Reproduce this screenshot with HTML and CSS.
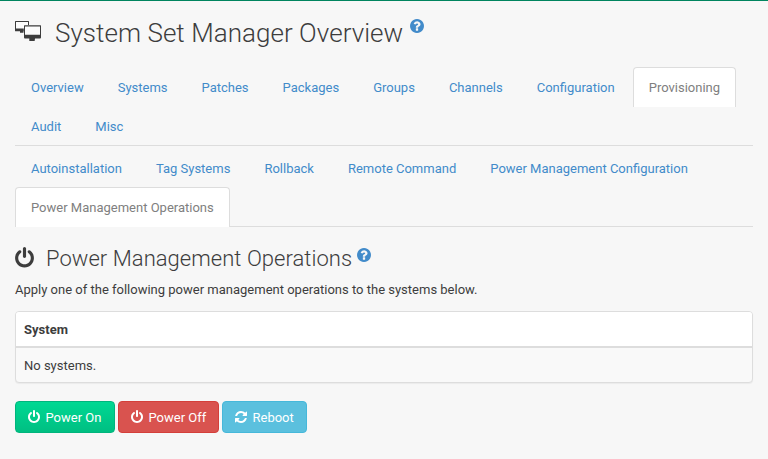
FILE: index.html
```html
<!DOCTYPE html>
<html lang="en">
<head>
<meta charset="utf-8">
<title>System Set Manager Overview</title>
<link rel="stylesheet" href="styles.css">
</head>
<body>
<svg class="defs" width="0" height="0" aria-hidden="true">
  <symbol id="power" viewBox="128 0 1536 1792"><path d="M1664 896q0 156-61 298t-164 245-245 164-298 61-298-61-245-164-164-245-61-298q0-182 80.500-343t226.500-270q43-32 95.500-25t83.500 50q32 42 24.500 94.500t-49.500 84.500q-98 74-151.500 181t-53.500 228q0 104 40.500 198.500t109.500 163.500 163.500 109.500 198.500 40.500 198.500-40.500 163.500-109.500 109.500-163.500 40.500-198.500q0-121-53.500-228t-151.500-181q-42-32-49.500-84.500t24.500-94.500q31-43 84-50t95 25q146 109 226.500 270t80.500 343zm-640-768v640q0 52-38 90t-90 38-90-38-38-90v-640q0-52 38-90t90-38 90 38 38 90z"/></symbol>
  <symbol id="help" viewBox="128 128 1536 1536"><path d="M1024 1376v-192q0-14-9-23t-23-9h-192q-14 0-23 9t-9 23v192q0 14 9 23t23 9h192q14 0 23-9t9-23zm256-672q0-88-55.500-163t-138.500-116-170-41q-243 0-371 213-15 24 8 42l132 100q7 6 19 6 16 0 25-12 53-68 86-92 34-24 86-24 48 0 85.500 26t37.500 59q0 38-20 61t-68 45q-63 28-115.500 86.500t-52.500 125.500v36q0 14 9 23t23 9h192q14 0 23-9t9-23q0-19 21.500-49.500t54.500-49.500q32-18 49-28.500t46-35 44.500-48 28-60.500 12.500-81zm384 192q0 209-103 385.500t-279.500 279.500-385.500 103-385.500-103-279.500-279.500-103-385.500 103-385.500 279.500-279.500 385.500-103 385.500 103 279.500 279.500 103 385.500z"/></symbol>
  <symbol id="refresh" viewBox="128 0 1536 1792"><path d="M1639 1056q0 5-1 7-64 268-268 434.500t-478 166.500q-146 0-282.500-55t-243.500-157l-129 129q-19 19-45 19t-45-19-19-45v-448q0-26 19-45t45-19h448q26 0 45 19t19 45-19 45l-137 137q71 66 161 102t187 36q134 0 250-65t186-179q11-17 53-117 8-23 30-23h192q13 0 22.500 9.500t9.500 22.500zm25-800v448q0 26-19 45t-45 19h-448q-26 0-45-19t-19-45 19-45l138-138q-148-137-349-137-134 0-250 65t-186 179q-11 17-53 117-8 23-30 23h-199q-13 0-22.500-9.500t-9.500-22.500v-7q65-268 270-434.500t480-166.500q146 0 284 55.500t245 156.500l130-129q19-19 45-19t45 19 19 45z"/></symbol>
</svg>
<main class="page">
  <h1 class="title">
    <svg class="title-icon" viewBox="0 0 27 21"><path class="screen" d="M1 1h12v7H1zM10 5h15v9H10z"/><path fill-rule="evenodd" d="M.4 0h13.200q.4 0 .4.400V4h-1V1H1v6.500h7.800v2.700H8.500v1.500H5V10.200H.5Q0 10.200 0 9.700V.4Q0 0 .4 0zM9.500 4.200h16q.5 0 .5.500v11.800q0 .9-.9.900H20v1h-.3V20h-5.400v-2.600H9.900q-.9 0-.9-.9V4.700q0-.5.5-.5zM10 5.400v8.300h15V5.400z"/></svg>
    <span>System Set Manager Overview</span>
    <svg class="help"><use href="#help"/></svg>
  </h1>
  <ul class="tabs">
    <li><a>Overview</a></li><li><a>Systems</a></li><li><a>Patches</a></li><li><a>Packages</a></li><li><a>Groups</a></li><li><a>Channels</a></li><li><a>Configuration</a></li><li><a class="active">Provisioning</a></li><li><a>Audit</a></li><li><a>Misc</a></li>
  </ul>
  <ul class="tabs subtabs">
    <li><a>Autoinstallation</a></li><li><a>Tag Systems</a></li><li><a>Rollback</a></li><li><a>Remote Command</a></li><li><a>Power Management Configuration</a></li><li><a class="active">Power Management Operations</a></li>
  </ul>
  <h2 class="section">
    <svg class="section-icon"><use href="#power"/></svg>
    <span>Power Management Operations</span>
    <svg class="help"><use href="#help"/></svg>
  </h2>
  <p class="intro">Apply one of the following power management operations to the systems below.</p>
  <div class="panel">
    <div class="panel-head">System</div>
    <div class="panel-row">No systems.</div>
  </div>
  <div class="actions">
    <button class="btn on"><svg><use href="#power"/></svg>Power On</button>
    <button class="btn off"><svg><use href="#power"/></svg>Power Off</button>
    <button class="btn reboot"><svg><use href="#refresh"/></svg>Reboot</button>
  </div>
</main>
</body>
</html>
```
FILE: styles.css
```css
* { box-sizing: border-box; }
body {
  margin: 0;
  background: #f7f7f7;
  color: #3d3d3d;
  font: 13px/18px Roboto, sans-serif;
}
.defs { display: none; }
svg { fill: currentColor; flex: none; }
.page {
  height: 459px;
  padding: 0 15px;
  border-top: 1px solid #00855f;
}
.title, .section {
  display: flex;
  align-items: flex-start;
  margin: 0;
  font-weight: 300;
  letter-spacing: 0.04px;
  white-space: nowrap;
}
.title { height: 66px; padding-top: 16px; font-size: 26px; line-height: 32px; }
.title-icon { width: 27px; height: 21px; margin: 4px 13px 0 0; }
.screen { fill: #fcfcfc; }
.help { width: 14px; height: 14px; color: #428bca; }
.title .help { margin: 2px 0 0 7px; }
.tabs {
  display: flex;
  flex-wrap: wrap;
  margin: 0;
  padding: 0;
  list-style: none;
  border-bottom: 1px solid #ddd;
}
.tabs li { height: 39px; margin-right: 2px; }
.tabs li a {
  display: block;
  height: 40px;
  padding: 11px 15px 10px;
  border: 1px solid transparent;
  border-bottom: 0;
  border-radius: 4px 4px 0 0;
  color: #428bca;
  white-space: nowrap;
}
.tabs li a.active {
  position: relative;
  background: #fff;
  border-color: #ddd;
  color: #808080;
}
.subtabs { margin-top: 2px; }
.section { height: 54px; padding-top: 18px; font-size: 22px; line-height: 28px; }
.section-icon { width: 19px; height: 22px; margin: 2px 12px 0 0; }
.section .help { margin: 3px 0 0 5px; }
.intro { margin: 0 0 12px; }
.panel {
  height: 72px;
  border: 1px solid #ddd;
  border-radius: 4px;
  background: #f9f9f9;
  box-shadow: 0 1px 1px rgba(0, 0, 0, 0.05);
  overflow: hidden;
}
.panel-head {
  height: 36px;
  padding: 9px 8px 7px;
  background: #fff;
  border-bottom: 2px solid #ddd;
  font-weight: 700;
}
.panel-row { padding: 9px 8px; }
.actions { display: flex; gap: 3px; margin-top: 18px; }
.btn {
  display: flex;
  align-items: center;
  height: 32px;
  padding: 1px 12px 0;
  border: 1px solid;
  border-radius: 4px;
  color: #fff;
  font: inherit;
  white-space: nowrap;
}
.btn svg { width: 12px; height: 14px; margin: -1px 5.5px 0 0; }
.on { width: 100px; border-color: #00b57d; background: linear-gradient(#00d893, #00bf82); }
.off { width: 101px; border-color: #d43f3a; background: #d9534f; }
.reboot { width: 85px; border-color: #46b8da; background: #5bc0de; }
```
